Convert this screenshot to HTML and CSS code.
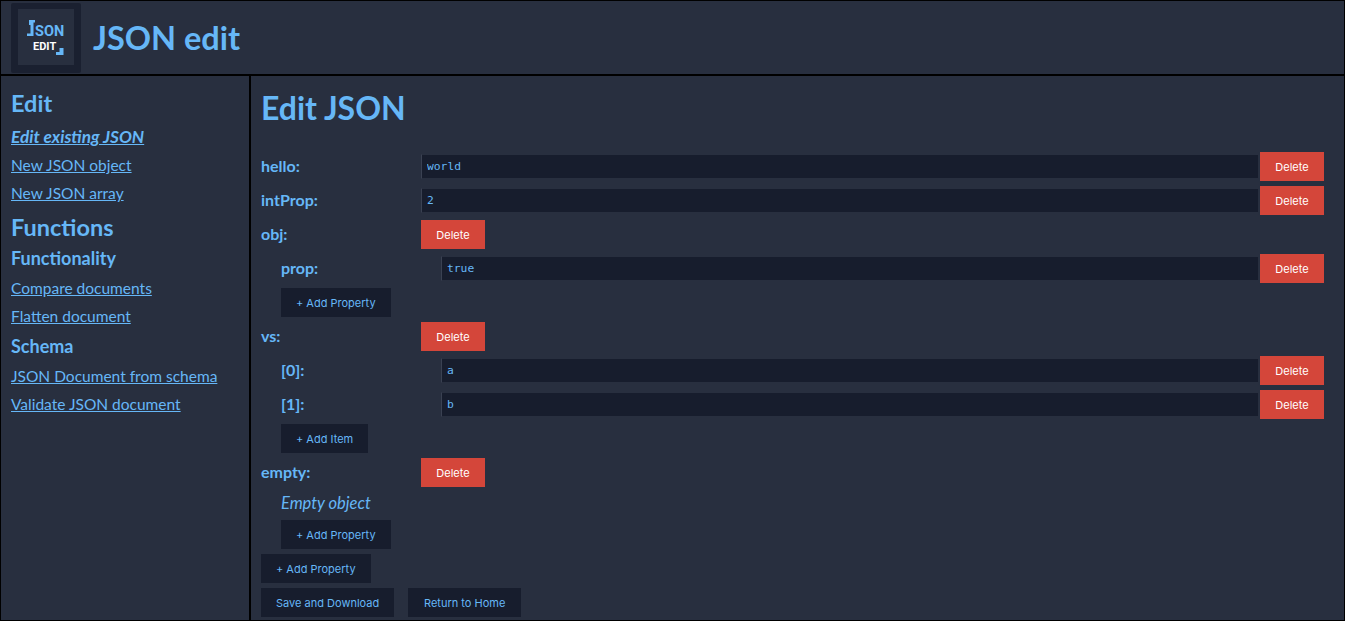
FILE: index.html
```html
<!DOCTYPE html>
<html lang="en">
<head>
<meta charset="utf-8">
<title>JSON edit</title>
<link rel="stylesheet" href="styles.css">
</head>
<body>
<div class="page">
  <header class="header">
    <div class="logo">
      <svg class="logo-svg" width="70" height="70" viewBox="0 0 70 70">
        <rect x="0" y="0" width="70" height="70" rx="2" class="logo-outer"/>
        <rect x="7" y="6" width="56" height="56" class="logo-inner"/>
        <path d="M18 17H24V19.500H22.500V33H16V30.500H19.500V22H18Z" class="logo-blue"/>
        <text x="24" y="33" class="logo-json">SON</text>
        <text x="22" y="47" class="logo-edit">EDIT</text>
        <path d="M48.500 45H52.500V52H45V49H48.500Z" class="logo-blue"/>
      </svg>
    </div>
    <div class="brand">JSON edit</div>
  </header>
  <div class="body">
    <nav class="sidebar">
      <h2 class="nav-h2">Edit</h2>
      <a class="nav-link nav-active" href="#">Edit existing JSON</a>
      <a class="nav-link" href="#">New JSON object</a>
      <a class="nav-link" href="#">New JSON array</a>
      <h2 class="nav-h1">Functions</h2>
      <h3 class="nav-h3">Functionality</h3>
      <a class="nav-link" href="#">Compare documents</a>
      <a class="nav-link" href="#">Flatten document</a>
      <h3 class="nav-h3 nav-h3-b">Schema</h3>
      <a class="nav-link" href="#">JSON Document from schema</a>
      <a class="nav-link" href="#">Validate JSON document</a>
    </nav>
    <main class="main">
      <h1 class="title">Edit JSON</h1>
      <div class="form">
        <div class="row"><label class="key">hello:</label><input class="field" value="world"><button class="btn-del">Delete</button></div>
        <div class="row"><label class="key">intProp:</label><input class="field" value="2"><button class="btn-del">Delete</button></div>
        <div class="row"><label class="key">obj:</label><button class="btn-del">Delete</button></div>
        <div class="nest">
          <div class="row"><label class="key">prop:</label><input class="field" value="true"><button class="btn-del">Delete</button></div>
          <div class="row"><button class="btn">+ Add Property</button></div>
        </div>
        <div class="row"><label class="key">vs:</label><button class="btn-del">Delete</button></div>
        <div class="nest">
          <div class="row"><label class="key">[0]:</label><input class="field" value="a"><button class="btn-del">Delete</button></div>
          <div class="row"><label class="key">[1]:</label><input class="field" value="b"><button class="btn-del">Delete</button></div>
          <div class="row"><button class="btn">+ Add Item</button></div>
        </div>
        <div class="row"><label class="key">empty:</label><button class="btn-del">Delete</button></div>
        <div class="nest">
          <div class="empty">Empty object</div>
          <div class="row"><button class="btn">+ Add Property</button></div>
        </div>
        <div class="row"><button class="btn">+ Add Property</button></div>
        <div class="row actions"><button class="btn">Save and Download</button><button class="btn btn-home">Return to Home</button></div>
      </div>
    </main>
  </div>
</div>
</body>
</html>
```
FILE: styles.css
```css
* { box-sizing: border-box; }
html, body { margin: 0; height: 100%; }
body { background: #282f3f; color: #66b7f7; font-family: "Lato", "Noto Sans", sans-serif; overflow: hidden; }
.page { height: 621px; border: 1px solid #000; display: flex; flex-direction: column; }
.header { height: 75px; flex: none; display: flex; align-items: flex-start; padding: 2px 0 0 10px; border-bottom: 2px solid #000; }
.logo { width: 70px; height: 70px; flex: none; }
.logo-svg { display: block; }
.logo-outer { fill: #1a2030; }
.logo-inner { fill: #282f3f; }
.logo-blue { fill: #66b7f7; }
.logo-json { fill: #66b7f7; font: 700 14.500px "Roboto", sans-serif; }
.logo-edit { fill: #fff; font: 700 11px "Roboto", sans-serif; }
.brand { font-size: 32.500px; line-height: 70px; font-weight: 700; margin-left: 12px; }
.body { flex: 1; display: flex; min-height: 0; }
.sidebar { width: 250px; flex: none; border-right: 2px solid #000; padding: 13px 10px 0; display: flex; flex-direction: column; align-items: flex-start; }
.nav-h2 { margin: 0 0 9px; font-size: 23.500px; line-height: 29px; font-weight: 700; }
.nav-h1 { margin: 1px 0 4px; font-size: 23.500px; line-height: 30px; font-weight: 700; }
.nav-h3 { margin: 0 0 8px; font-size: 18px; line-height: 24px; font-weight: 700; }
.nav-h3-b { margin: 0 0 8px; }
.nav-link { color: #66b7f7; font-size: 15.500px; line-height: 20px; margin-bottom: 8px; }
.nav-active { font-size: 17.200px; font-weight: 700; font-style: italic; }
.main { flex: 1; min-width: 0; padding: 12px 20px 0 10px; }
.title { margin: 0 0 24px; font-size: 32px; line-height: 40px; font-weight: 700; }
.form { display: flex; flex-direction: column; gap: 5px; }
.nest { display: flex; flex-direction: column; gap: 5px; padding-left: 20px; }
.row { display: flex; align-items: center; min-height: 29px; }
.key { width: 160px; flex: none; font-size: 16px; font-weight: 700; padding-bottom: 2px; }
.field { flex: 1; min-width: 0; height: 25px; background: #171d2d; background-clip: padding-box; color: #66b7f7; border: 0 solid transparent; border-width: 1px 0 1px 1px; border-left-color: #3a4152; padding: 0 4px 0 5px; font: 11.300px "DejaVu Sans Mono", monospace; margin-right: 2px; }
button { font-family: "Inter", "Roboto", sans-serif; font-size: 11px; height: 29px; border: 0; border-radius: 0; }
.btn-del { width: 64px; flex: none; background: #d4463a; color: #fff; padding: 0; }
.btn { background: #171d2d; color: #66b7f7; padding: 0 15px; }
.btn-home { width: 113px; }
.actions { gap: 14px; }
.empty { font-size: 16.500px; font-style: italic; line-height: 23px; }
```
